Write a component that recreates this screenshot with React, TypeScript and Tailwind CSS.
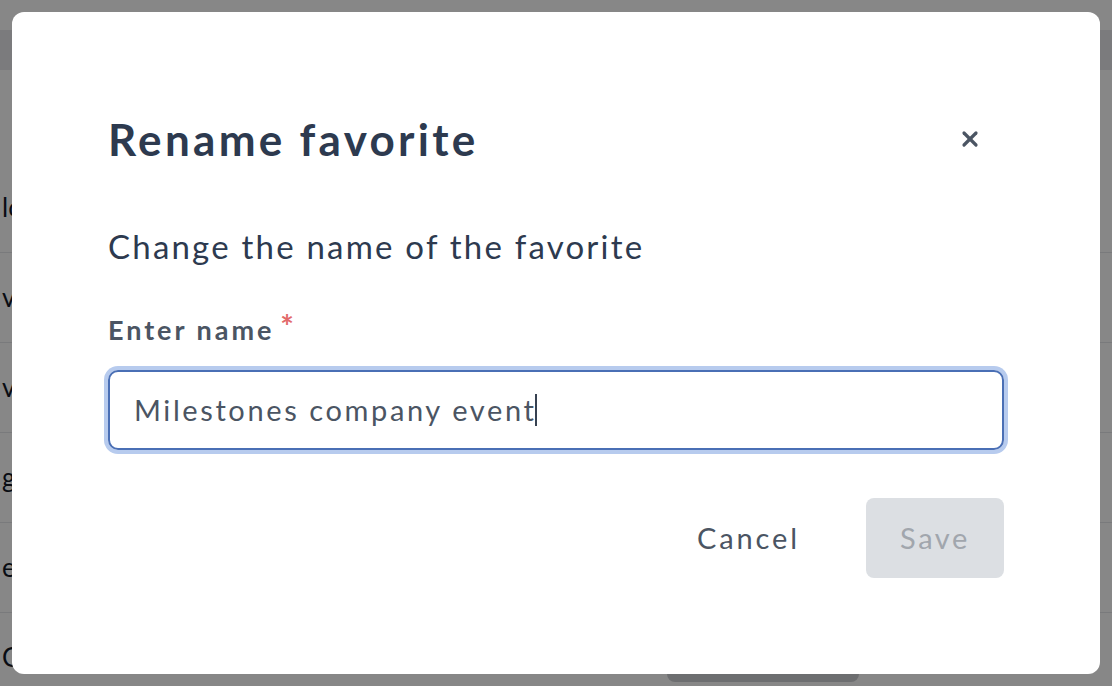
import { X } from 'lucide-react';

const rows = ['location', 'venues', 'vendors', 'gifts', 'events', 'Gala'];

function BackgroundPage() {
  return (
    <div className="absolute inset-0 bg-white">
      <div className="h-[30px]" />
      <div className="h-[40px] bg-[#e8e8ec]" />
      <div className="h-[93px]" />
      <div className="flex flex-col">
        {rows.map((r, i) => (
          <div
            key={i}
            className="flex h-[90px] items-center border-b border-[#e5e7eb] pl-[2px] text-[26px] text-[#111827]"
          >
            {r}
          </div>
        ))}
      </div>
      <div className="absolute left-[667px] top-[640px] h-[42px] w-[192px] rounded-lg bg-[#cfd0d4]" />
    </div>
  );
}

export default function App() {
  return (
    <div
      className="relative h-[686px] w-full overflow-hidden"
      style={{ fontFamily: 'Lato, "Noto Sans", sans-serif' }}
    >
      <BackgroundPage />
      <div className="absolute inset-0 flex bg-black/[0.47] p-3">
        <div className="flex flex-1 flex-col rounded-xl bg-white px-[96px] pt-[100px] pb-[96px]">
          <div className="flex h-[54px] items-center justify-between">
            <h2 className="text-[44px] font-bold leading-none tracking-[0.075em] text-[#2d3a4f]">
              Rename favorite
            </h2>
            <button className="mr-[22px] flex h-6 w-6 items-center justify-center text-[#4b5563]">
              <X className="h-6 w-6" strokeWidth={3.2} />
            </button>
          </div>
          <p className="mt-[60px] h-[40px] text-[33px] leading-[40px] tracking-[0.067em] text-[#2d3a4f]">
            Change the name of the favorite
          </p>
          <label className="mt-[48px] flex h-[32px] items-center gap-[6px] text-[27px] font-bold tracking-[0.11em] text-[#4b5563]">
            Enter name
            <span className="-mt-[6px] text-[32px] leading-none text-[#e26a6a]">*</span>
          </label>
          <div className="mt-[24px] flex h-[80px] items-center rounded-[10px] border-2 border-[#4a6fb5] px-6 text-[29px] tracking-[0.09em] text-[#4b5563] ring-4 ring-[#b7cbee]">
            <span>Milestones company event</span>
            <span className="-ml-[2px] h-[32px] w-[2px] bg-[#374151]" />
          </div>
          <div className="mt-[48px] flex h-[80px] items-center justify-end gap-[36px]">
            <button className="h-[80px] px-[30px] text-[29px] tracking-[0.1em] text-[#4b5563]">Cancel</button>
            <button className="h-[80px] w-[138px] rounded-lg bg-[#dcdfe3] text-[29px] tracking-[0.09em] text-[#a1a6ad]">
              Save
            </button>
          </div>
        </div>
      </div>
    </div>
  );
}
